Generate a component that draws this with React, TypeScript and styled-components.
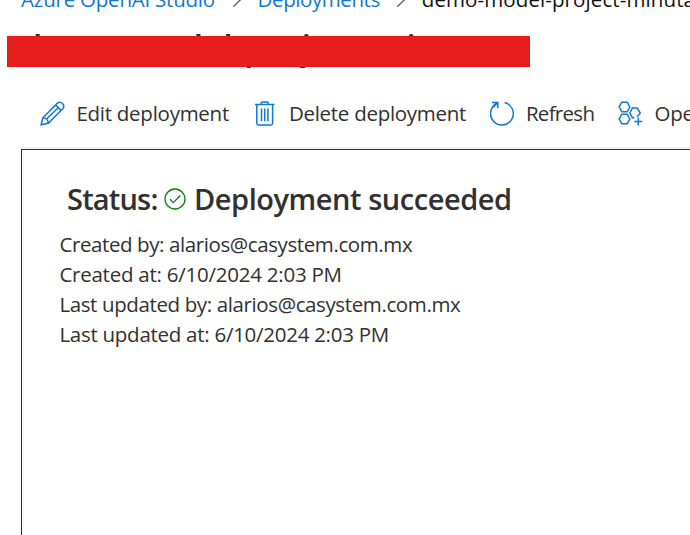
import React from 'react';
import styled, { createGlobalStyle } from 'styled-components';

const GlobalStyle = createGlobalStyle`
  * { box-sizing: border-box; }
  html, body { margin: 0; background: #fff; overflow: hidden; }
  body { font-family: 'Open Sans', 'Noto Sans', sans-serif; font-size: 20.5px; color: #323130; }
`;

const Page = styled.main`
  height: 535px;
  width: 690px;
  overflow: hidden;
  display: flex;
  flex-direction: column;
`;

const Breadcrumb = styled.nav`
  display: flex;
  flex: none;
  height: 30px;
  margin-top: -16px;
  padding-left: 21px;
  line-height: 30px;
  white-space: nowrap;
`;

const Crumb = styled.span<{ $width?: number; $spacing: number; $current?: boolean }>`
  flex: none;
  width: ${p => (p.$width ? `${p.$width}px` : 'auto')};
  letter-spacing: ${p => p.$spacing}px;
  color: ${p => (p.$current ? '#111' : '#0f78d4')};
`;

const Separator = styled.svg`
  flex: none;
  width: 42px;
  height: 30px;
  fill: none;
  stroke: #605e5c;
  stroke-width: 1.3;
`;

const TitleBar = styled.header`
  position: relative;
  flex: none;
  height: 48px;
  margin-top: 9px;
  padding-left: 21px;
`;

const Title = styled.h1`
  margin: 0;
  font-size: 34.5px;
  font-weight: 600;
  line-height: 48px;
  letter-spacing: 0.05px;
  white-space: nowrap;
`;

const Redaction = styled.div`
  position: absolute;
  left: 7px;
  top: 13px;
  width: 523px;
  height: 31px;
  background: #e71d1d;
`;

const Toolbar = styled.div`
  display: flex;
  flex: none;
  height: 30px;
  margin-top: 27px;
  padding-left: 40px;
  line-height: 30px;
  white-space: nowrap;
`;

const Command = styled.button<{ $width: number; $spacing: number }>`
  display: flex;
  flex: none;
  align-items: center;
  gap: 11.4px;
  width: ${p => p.$width}px;
  padding: 0;
  border: 0;
  background: none;
  color: inherit;
  font: inherit;
  line-height: 30px;
  letter-spacing: ${p => p.$spacing}px;
`;

const CommandIcon = styled.svg`
  flex: none;
  width: 25px;
  height: 25px;
  fill: none;
  stroke: #0f78d4;
  stroke-width: 1.5;
`;

const Panel = styled.section`
  flex: 1;
  margin: 19px 0 0 21px;
  border-top: 2px solid #f3f2f1;
`;

const PanelBody = styled.div`
  height: 100%;
  padding: 29px 0 0 37.4px;
  border-top: 1px solid #323130;
  border-left: 1px solid #323130;
`;

const Status = styled.h2`
  display: flex;
  align-items: center;
  height: 40px;
  margin: 0 0 10px;
  padding-left: 7.6px;
  font-size: 29px;
  font-weight: 600;
  line-height: 40px;
  white-space: nowrap;
`;

const StatusText = styled.span<{ $width?: number; $spacing: number }>`
  width: ${p => (p.$width ? `${p.$width}px` : 'auto')};
  letter-spacing: ${p => p.$spacing}px;
`;

const StatusIcon = styled.svg`
  flex: none;
  width: 22px;
  height: 22px;
  margin-right: 7.5px;
  fill: none;
  stroke: #107c10;
  stroke-width: 1.3;
`;

const Detail = styled.div<{ $spacing: number }>`
  height: 30px;
  line-height: 30px;
  letter-spacing: ${p => p.$spacing}px;
  white-space: nowrap;
`;

const Chevron = () => (
  <Separator viewBox="0 0 42 30">
    <path d="M17.3 7.5 L25.2 15 L17.3 22.7" />
  </Separator>
);

const EditIcon = () => (
  <CommandIcon viewBox="0 0 25 25">
    <path d="M1.2 23.8 L2.9 16.8 L17.2 2.4 C20.6 -0.8 26.2 4.2 22.6 7.9 L8.2 22.2 Z M2.9 16.8 C5.8 16.8 8.2 19 8.2 22.2 M15.6 4 L21 9.4 M6.3 18.3 L18.2 6.7" />
  </CommandIcon>
);

const DeleteIcon = () => (
  <CommandIcon viewBox="0 0 25 25">
    <path d="M2 3.6 H21.4 M8.3 3.6 V1.8 Q8.3 1 9.1 1 H14.3 Q15.1 1 15.1 1.8 V3.6 M3.8 3.6 V22.3 Q3.8 23.9 5.4 23.9 H18 Q19.6 23.9 19.6 22.3 V3.6 M8.5 7.5 V20.3 M11.7 7.5 V20.3 M14.9 7.5 V20.3" />
  </CommandIcon>
);

const RefreshIcon = () => (
  <CommandIcon viewBox="0 0 25 25">
    <path d="M14.6 1.5 A11.4 11.4 0 1 1 7.2 2.2 M2 1.5 H7.8 V7.3 M7.8 1.5 L3.2 6.2" />
  </CommandIcon>
);

const PlaygroundIcon = () => (
  <CommandIcon viewBox="0 0 25 25">
    <path d="M3.8 1.2 H9.2 L11.8 6 L9.2 10.8 H3.8 L1.2 6 Z M3.8 13.2 H9.2 L11.8 18 L9.2 22.8 H3.8 L1.2 18 Z M19.2 15.8 L22.3 12 L19.2 7 H14.4 L11.9 12 L14.4 16.7 H16.3 M20.3 16.5 V24.5 M16.3 20.5 H24.3" />
  </CommandIcon>
);

export default function App() {
  return (
    <>
      <GlobalStyle />
      <Page>
        <Breadcrumb>
          <Crumb $width={194.6} $spacing={-0.22}>Azure OpenAI Studio</Crumb>
          <Chevron />
          <Crumb $width={122.2} $spacing={-0.42}>Deployments</Crumb>
          <Chevron />
          <Crumb $spacing={0.1} $current>demo-model-project-minuta</Crumb>
        </Breadcrumb>
        <TitleBar>
          <Title>demo-model-project-minuta</Title>
          <Redaction />
        </TitleBar>
        <Toolbar>
          <Command $width={212.5} $spacing={-0.26}><EditIcon />Edit deployment</Command>
          <Command $width={237} $spacing={-0.28}><DeleteIcon />Delete deployment</Command>
          <Command $width={128.5} $spacing={-0.7}><RefreshIcon />Refresh</Command>
          <Command $width={200} $spacing={-0.2}><PlaygroundIcon />Open in Playground</Command>
        </Toolbar>
        <Panel>
          <PanelBody>
            <Status>
              <StatusText $width={97.5} $spacing={-0.8}>Status:</StatusText>
              <StatusIcon viewBox="0 0 22 22">
                <circle cx="11" cy="11" r="10" />
                <path d="M6 11.3 L9.3 14.6 L16.3 7.5" />
              </StatusIcon>
              <StatusText $spacing={-0.45}>Deployment succeeded</StatusText>
            </Status>
            <Detail $spacing={-0.4}>Created by: alarios@casystem.com.mx</Detail>
            <Detail $spacing={-0.24}>Created at: 6/10/2024 2:03 PM</Detail>
            <Detail $spacing={-0.38}>Last updated by: alarios@casystem.com.mx</Detail>
            <Detail $spacing={-0.27}>Last updated at: 6/10/2024 2:03 PM</Detail>
          </PanelBody>
        </Panel>
      </Page>
    </>
  );
}
